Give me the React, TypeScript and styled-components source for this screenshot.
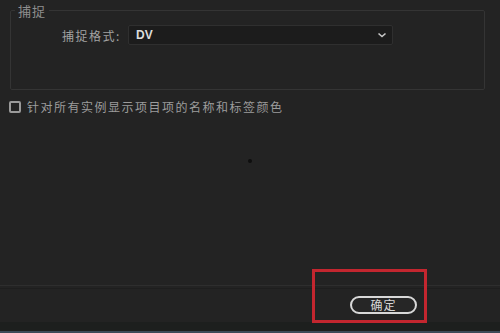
import React from 'react'
import styled, { createGlobalStyle } from 'styled-components'

const GlobalStyle = createGlobalStyle`
  html, body {
    margin: 0;
    padding: 0;
    background: #232323;
  }
  body {
    font-family: "Noto Sans CJK SC", "Liberation Sans", sans-serif;
  }
`

export default function App() {
  return (
    <Page>
      <GlobalStyle />
      <Content>
        <GroupBox>
          <Legend>捕捉</Legend>
          <FieldRow>
            <FieldLabel>捕捉格式:</FieldLabel>
            <Select>
              <SelectValue>DV</SelectValue>
              <Chevron width="10" height="8" viewBox="0 0 10 8">
                <path d="M1.5 2.5 L5 5.5 L8.5 2.5" fill="none" stroke="#c8c8c8" strokeWidth="1.6" />
              </Chevron>
            </Select>
          </FieldRow>
        </GroupBox>
        <CheckRow>
          <CheckBox />
          <CheckText>针对所有实例显示项目项的名称和标签颜色</CheckText>
        </CheckRow>
        <Speck />
      </Content>
      <Separator />
      <Footer>
        <HighlightWrap>
          <PillButton>确定</PillButton>
          <Highlight />
        </HighlightWrap>
      </Footer>
      <BottomStrip />
    </Page>
  )
}

const Page = styled.div`
  width: 500px;
  height: 333px;
  display: flex;
  flex-direction: column;
  background: #232323;
  overflow: hidden;
`

const Content = styled.div`
  flex: 1;
  display: flex;
  flex-direction: column;
  position: relative;
`

const GroupBox = styled.fieldset`
  margin: 3px 15px 0 10px;
  padding: 0;
  border: 1px solid #343434;
  border-radius: 2px;
  min-height: 87px;
  box-sizing: border-box;
`

const Legend = styled.legend`
  margin-left: 4px;
  padding: 0 3px;
  font-size: 13px;
  line-height: 15px;
  color: #8e8e8e;
  letter-spacing: 1px;
`

const FieldRow = styled.div`
  display: flex;
  align-items: center;
  margin-top: 7px;
  padding-left: 51px;
`

const FieldLabel = styled.span`
  font-size: 12px;
  color: #a2a2a2;
  letter-spacing: 1.5px;
  width: 66px;
`

const Select = styled.div`
  width: 265px;
  height: 20px;
  box-sizing: border-box;
  background: #1c1c1c;
  border: 1px solid #2f2f2f;
  border-radius: 2px;
  display: flex;
  align-items: center;
  justify-content: space-between;
  padding: 0 5px 0 7px;
`

const SelectValue = styled.span`
  font-family: "Liberation Sans", sans-serif;
  font-size: 12px;
  font-weight: bold;
  color: #dcdcdc;
`

const Chevron = styled.svg`
  display: block;
`

const CheckRow = styled.div`
  display: flex;
  align-items: center;
  margin-top: 10px;
  padding-left: 9px;
`

const CheckBox = styled.span`
  width: 12px;
  height: 12px;
  box-sizing: border-box;
  border: 2px solid #9a9a9a;
  border-radius: 2px;
  margin-right: 6px;
`

const CheckText = styled.span`
  font-size: 12px;
  line-height: 14px;
  color: #9c9c9c;
  letter-spacing: 1.5px;
`

const Speck = styled.span`
  position: absolute;
  left: 248px;
  top: 159px;
  width: 4px;
  height: 4px;
  border-radius: 50%;
  background: #0e0e0e;
`

const Separator = styled.div`
  height: 4px;
  border-top: 1px solid #2e2e2e;
  border-bottom: 1px solid #1e1e1e;
  box-sizing: border-box;
`

const Footer = styled.div`
  height: 33px;
  display: flex;
  justify-content: flex-end;
  align-items: flex-start;
  padding-right: 83px;
`

const HighlightWrap = styled.div`
  position: relative;
  margin-top: 7px;
`

const PillButton = styled.button`
  width: 67px;
  height: 18px;
  box-sizing: border-box;
  border: 2px solid #d8d8d8;
  border-radius: 9px;
  background: #262626;
  color: #d6d6d6;
  font-family: "Noto Sans CJK SC", sans-serif;
  font-size: 12px;
  line-height: 14px;
  letter-spacing: 1px;
  padding: 0;
  display: flex;
  align-items: center;
  justify-content: center;
`

const Highlight = styled.div`
  position: absolute;
  left: -38px;
  top: -27px;
  width: 115px;
  height: 54px;
  box-sizing: border-box;
  border: 3px solid #c3262f;
  pointer-events: none;
`

const BottomStrip = styled.div`
  height: 11px;
  box-sizing: border-box;
  background: #1d1f1e;
  border-bottom: 2px solid #3b4a58;
`
